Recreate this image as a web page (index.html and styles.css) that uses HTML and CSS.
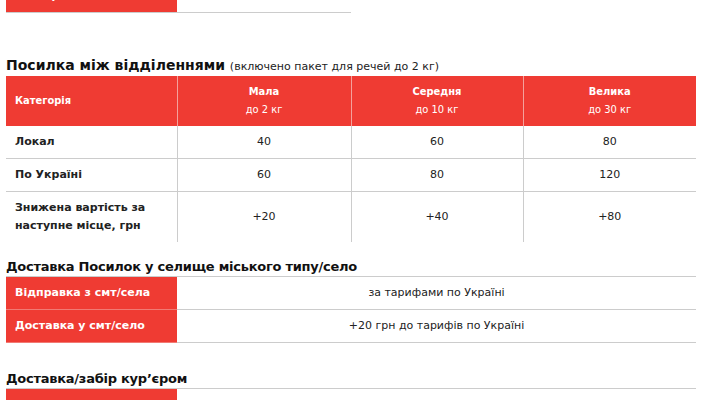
FILE: index.html
```html
<!DOCTYPE html>
<html lang="uk">
<head>
<meta charset="utf-8">
<title>Тарифи</title>
<link rel="stylesheet" href="styles.css">
</head>
<body>
<div class="page">
  <table class="tbl tbl-top">
    <colgroup><col class="c1"><col class="c2t"></colgroup>
    <tr><td class="red">По Україні</td><td class="val">60</td></tr>
  </table>

  <h2 class="h-main">Посилка між відділеннями <span class="note">(включено пакет для речей до 2 кг)</span></h2>
  <table class="tbl tbl-grid">
    <colgroup><col class="c1"><col class="c2"><col class="c3"><col class="c4"></colgroup>
    <thead>
      <tr>
        <th class="th-first">Категорія</th>
        <th><b>Мала</b><br>до 2 кг</th>
        <th><b>Середня</b><br>до 10 кг</th>
        <th><b>Велика</b><br>до 30 кг</th>
      </tr>
    </thead>
    <tbody>
      <tr><td class="lbl">Локал</td><td>40</td><td>60</td><td>80</td></tr>
      <tr><td class="lbl">По Україні</td><td>60</td><td>80</td><td>120</td></tr>
      <tr class="last"><td class="lbl">Знижена вартість за наступне місце, грн</td><td>+20</td><td>+40</td><td>+80</td></tr>
    </tbody>
  </table>

  <h3 class="h-sub">Доставка Посилок у селище міського типу/село</h3>
  <table class="tbl tbl-kv">
    <colgroup><col class="c1"><col class="cw"></colgroup>
    <tr><td class="red">Відправка з смт/села</td><td class="val">за тарифами по Україні</td></tr>
    <tr><td class="red">Доставка у смт/село</td><td class="val">+20 грн до тарифів по Україні</td></tr>
  </table>

  <h3 class="h-sub h-sub2">Доставка/забір кур’єром</h3>
  <table class="tbl tbl-kv">
    <colgroup><col class="c1"><col class="cw"></colgroup>
    <tr><td class="red">До 30 кг</td><td class="val">+20 грн для відправок до 30 кг</td></tr>
  </table>
</div>
</body>
</html>
```

FILE: styles.css
```css
html, body {
  margin: 0;
  padding: 0;
  background: #ffffff;
}
body {
  font-family: "DejaVu Sans", Verdana, sans-serif;
  font-size: 11px;
  color: #222222;
  overflow: hidden;
}
.page {
  padding: 0 10px 0 6px;
}
.tbl {
  border-collapse: collapse;
  table-layout: fixed;
}
.tbl td, .tbl th {
  padding: 7px 9px;
  line-height: 18px;
  vertical-align: middle;
}
.c1 { width: 171px; }
.c2 { width: 174px; }
.c3 { width: 172px; }
.c4 { width: 173px; }
.c2t { width: 174px; }
.cw { width: 519px; }

.tbl-top {
  width: 345px;
  margin-top: -20px;
}
.tbl-top td {
  border-bottom: 1px solid #cccccc;
}
.red {
  background: #ef3b33;
  color: #ffffff;
  font-weight: bold;
}
.val {
  text-align: center;
}

.h-main {
  margin: 43px 0 0 0;
  font-size: 14px;
  line-height: 18px;
  font-weight: bold;
  color: #111111;
}
.note {
  font-size: 11px;
  font-weight: normal;
  color: #222222;
}

.tbl-grid {
  width: 690px;
}
.tbl-grid th {
  background: #ef3b33;
  color: #ffffff;
  font-family: "DejaVu Sans Condensed", Tahoma, sans-serif;
  font-weight: normal;
  text-align: center;
  border-left: 1px solid #f4a19c;
}
.tbl-grid th b {
  font-weight: bold;
}
.tbl-grid th.th-first {
  text-align: left;
  font-weight: bold;
  border-left: none;
}
.tbl-grid td {
  text-align: center;
  border-left: 1px solid #cccccc;
  border-bottom: 1px solid #cccccc;
}
.tbl-grid td.lbl {
  text-align: left;
  font-weight: bold;
  border-left: none;
}
.tbl-grid tr.last td {
  border-bottom: none;
}

.h-sub {
  margin: 16px 0 0 0;
  font-size: 13px;
  line-height: 18px;
  font-weight: bold;
  letter-spacing: -0.25px;
  color: #111111;
}
.h-sub2 {
  margin-top: 27px;
}
.tbl-kv {
  width: 690px;
  border-top: 1px solid #cccccc;
}
.tbl-kv td {
  border-bottom: 1px solid #cccccc;
}
.tbl-kv td.red {
  border-bottom: 1px solid #f17a74;
}
```
